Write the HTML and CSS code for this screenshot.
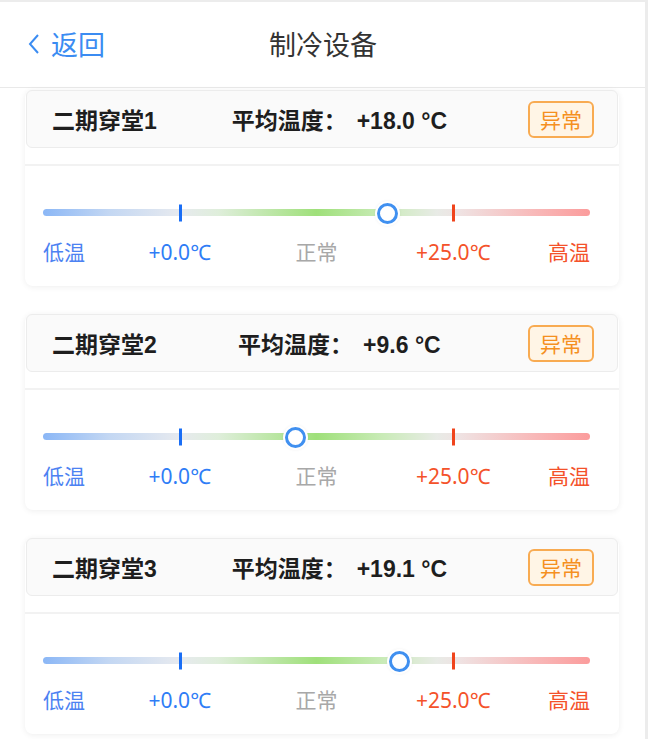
FILE: index.html
```html
<!DOCTYPE html>
<html lang="zh-CN">
<head>
<meta charset="utf-8">
<title>制冷设备</title>
<link rel="stylesheet" href="styles.css">
</head>
<body>
<div class="app">
  <header class="nav">
    <a class="back">
      <svg class="chev" width="14" height="22" viewBox="0 0 14 22"><path d="M11 2 L3 11 L11 20" fill="none" stroke="#3b8cf2" stroke-width="2"/></svg>
      <span>返回</span>
    </a>
    <h1 class="title">制冷设备</h1>
    <span class="nav-spacer"></span>
  </header>
  <main class="list">
    <section class="card">
      <div class="card-head">
        <span class="name">二期穿堂1</span>
        <span class="avg">平均温度：<span class="val">+18.0 °C</span></span>
        <span class="badge">异常</span>
      </div>
      <div class="card-body">
        <div class="track">
          <span class="tick tick-low"></span>
          <span class="tick tick-high"></span>
          <span class="knob" style="left: 61%"></span>
        </div>
        <div class="labels">
          <span class="lb lb-low">低温</span>
          <span class="lb lb-min">+0.0℃</span>
          <span class="lb lb-mid">正常</span>
          <span class="lb lb-max">+25.0℃</span>
          <span class="lb lb-high">高温</span>
        </div>
      </div>
    </section>
    <section class="card">
      <div class="card-head">
        <span class="name">二期穿堂2</span>
        <span class="avg">平均温度：<span class="val">+9.6 °C</span></span>
        <span class="badge">异常</span>
      </div>
      <div class="card-body">
        <div class="track">
          <span class="tick tick-low"></span>
          <span class="tick tick-high"></span>
          <span class="knob" style="left: 44.2%"></span>
        </div>
        <div class="labels">
          <span class="lb lb-low">低温</span>
          <span class="lb lb-min">+0.0℃</span>
          <span class="lb lb-mid">正常</span>
          <span class="lb lb-max">+25.0℃</span>
          <span class="lb lb-high">高温</span>
        </div>
      </div>
    </section>
    <section class="card">
      <div class="card-head">
        <span class="name">二期穿堂3</span>
        <span class="avg">平均温度：<span class="val">+19.1 °C</span></span>
        <span class="badge">异常</span>
      </div>
      <div class="card-body">
        <div class="track">
          <span class="tick tick-low"></span>
          <span class="tick tick-high"></span>
          <span class="knob" style="left: 63.2%"></span>
        </div>
        <div class="labels">
          <span class="lb lb-low">低温</span>
          <span class="lb lb-min">+0.0℃</span>
          <span class="lb lb-mid">正常</span>
          <span class="lb lb-max">+25.0℃</span>
          <span class="lb lb-high">高温</span>
        </div>
      </div>
    </section>
  </main>
</div>
</body>
</html>
```
FILE: styles.css
```css
* { box-sizing: border-box; }
html, body { margin: 0; padding: 0; }
body {
  background: #ececec;
  font-family: "Noto Sans", "Noto Sans CJK SC", sans-serif;
  width: 648px;
  height: 739px;
  overflow: hidden;
}
.app {
  width: 645px;
  height: 737px;
  margin-top: 2px;
  background: #fff;
  overflow: hidden;
}
.nav {
  height: 86px;
  border-bottom: 1px solid #e9e9e9;
  display: flex;
  align-items: center;
  padding: 0 0 2px 27px;
}
.back {
  width: 160px;
  display: flex;
  align-items: center;
  gap: 10px;
  color: #3b8cf2;
  font-size: 27px;
}
.chev { display: block; }
.title {
  flex: 1;
  margin: 0;
  text-align: center;
  font-size: 27px;
  font-weight: 400;
  color: #333;
  padding-right: 26px;
}
.nav-spacer { width: 160px; }
.list {
  padding: 2px 26px 0 25px;
  display: flex;
  flex-direction: column;
  gap: 28px;
}
.card {
  background: #fff;
  border-radius: 8px;
  box-shadow: 0 1px 6px rgba(0, 0, 0, 0.07);
}
.card-head {
  height: 58px;
  margin: 0 1px;
  background: #fafafa;
  border: 1px solid #ececec;
  border-radius: 6px;
  display: flex;
  align-items: center;
  justify-content: space-between;
  padding: 0 23px 0 25px;
  font-family: "Liberation Sans", "Noto Sans CJK SC", sans-serif;
  font-size: 23px;
  font-weight: 700;
  color: #1e1e1e;
}
.avg { margin-left: -6px; }
.avg .val { margin-left: 10px; }
.badge {
  width: 66px;
  height: 37px;
  border: 2px solid #f8ab52;
  background: #fff5e6;
  border-radius: 6px;
  color: #f5901f;
  font-family: "Noto Sans CJK SC", sans-serif;
  font-size: 21px;
  font-weight: 400;
  display: flex;
  align-items: center;
  justify-content: center;
}
.card-body {
  margin-top: 16px;
  border-top: 2px solid #f2f2f2;
  padding: 43px 29px 20px 18px;
}
.track {
  position: relative;
  height: 7px;
  border-radius: 4px;
  background: linear-gradient(90deg,
    #8bb7f6 0%,
    #c3d7f3 12%,
    #e7eaef 25%,
    #dfeedb 32%,
    #9fe07a 50%,
    #c9ebb7 62%,
    #e8ebe6 72%,
    #efe3e3 76%,
    #f8b8b8 90%,
    #fb9c9c 100%);
}
.tick {
  position: absolute;
  top: 50%;
  width: 3px;
  height: 17px;
  margin-left: -1px;
  transform: translateY(-50%);
}
.tick-low { left: 25%; background: #1a6ef5; }
.tick-high { left: 75%; background: #f0441c; }
.knob {
  position: absolute;
  top: 50%;
  width: 21px;
  height: 21px;
  margin-top: -10px;
  border-radius: 50%;
  background: #fff;
  border: 3px solid #4090f0;
  box-shadow: 0 0 0 2px #fff, 0 0 3px 2px rgba(0,0,0,0.06);
}
.labels {
  margin-top: 22px;
  display: grid;
  grid-template-columns: repeat(8, 1fr);
  font-size: 21px;
  line-height: 28px;
}
.lb { white-space: nowrap; }
.lb-low { grid-column: 1; color: #4c82f2; }
.lb-min { grid-column: 2 / 4; text-align: center; color: #2f7df6; }
.lb-mid { grid-column: 4 / 6; text-align: center; color: #a8a8a8; }
.lb-max { grid-column: 6 / 8; text-align: center; color: #f4522a; }
.lb-high { grid-column: 8; text-align: right; color: #f4522a; }
```
